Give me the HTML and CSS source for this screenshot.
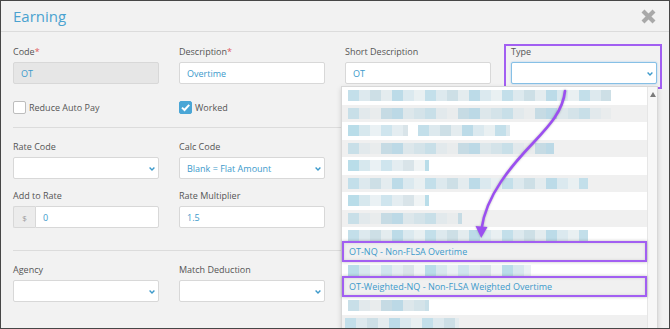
FILE: index.html
```html
<!DOCTYPE html>
<html lang="en">
<head>
    <meta charset="UTF-8">
    <title>Earning</title>
    <link rel="stylesheet" href="styles.css">
</head>
<body>
    <div class="modal">
        <div class="modal-header">
            <h2 class="modal-title">Earning</h2>
            <button class="close-btn" aria-label="Close">
                <svg width="17" height="17" viewBox="0 0 17 17">
                    <path d="M3 3 L14 14 M14 3 L3 14" stroke="#a9a9a9" stroke-width="4.2" fill="none"/>
                </svg>
            </button>
        </div>

        <div class="modal-body">
            <div class="form-row">
                <div class="field">
                    <label>Code<span class="req">*</span></label>
                    <div class="input disabled">OT</div>
                </div>
                <div class="field">
                    <label>Description<span class="req">*</span></label>
                    <div class="input">Overtime</div>
                </div>
                <div class="field">
                    <label>Short Description</label>
                    <div class="input">OT</div>
                </div>
                <div class="field marked-field">
                    <label>Type</label>
                    <div class="input select focused">
                        <svg class="chevron" width="6" height="4" viewBox="0 0 6 4"><path d="M0.6 0.6 L3 3 L5.4 0.6" stroke="#3d9acb" stroke-width="1.4" fill="none"/></svg>
                    </div>
                </div>
            </div>

            <div class="check-row">
                <label class="check"><span class="box"></span>Reduce Auto Pay</label>
                <label class="check"><span class="box checked">
                    <svg width="11" height="11" viewBox="0 0 11 11"><path d="M2 5.6 L4.5 8 L9.2 2.8" stroke="#fff" stroke-width="2" fill="none"/></svg>
                </span>Worked</label>
            </div>

            <hr class="divider">

            <div class="form-row">
                <div class="field">
                    <label>Rate Code</label>
                    <div class="input select">
                        <svg class="chevron" width="6" height="4" viewBox="0 0 6 4"><path d="M0.6 0.6 L3 3 L5.4 0.6" stroke="#3d9acb" stroke-width="1.4" fill="none"/></svg>
                    </div>
                </div>
                <div class="field">
                    <label>Calc Code</label>
                    <div class="input select">Blank = Flat Amount
                        <svg class="chevron" width="6" height="4" viewBox="0 0 6 4"><path d="M0.6 0.6 L3 3 L5.4 0.6" stroke="#3d9acb" stroke-width="1.4" fill="none"/></svg>
                    </div>
                </div>
            </div>

            <div class="form-row row-tight">
                <div class="field">
                    <label>Add to Rate</label>
                    <div class="input-group">
                        <span class="addon">$</span>
                        <div class="input">0</div>
                    </div>
                </div>
                <div class="field">
                    <label>Rate Multiplier</label>
                    <div class="input">1.5</div>
                </div>
            </div>

            <hr class="divider divider-low">

            <div class="form-row">
                <div class="field">
                    <label>Agency</label>
                    <div class="input select">
                        <svg class="chevron" width="6" height="4" viewBox="0 0 6 4"><path d="M0.6 0.6 L3 3 L5.4 0.6" stroke="#3d9acb" stroke-width="1.4" fill="none"/></svg>
                    </div>
                </div>
                <div class="field">
                    <label>Match Deduction</label>
                    <div class="input select">
                        <svg class="chevron" width="6" height="4" viewBox="0 0 6 4"><path d="M0.6 0.6 L3 3 L5.4 0.6" stroke="#3d9acb" stroke-width="1.4" fill="none"/></svg>
                    </div>
                </div>
            </div>
        </div>

        <!-- open Type dropdown, option names are blurred out -->
        <div class="type-dropdown">
            <ul class="opt-list">
                <li class="opt"><span class="blur p1 w263"></span></li>
                <li class="opt alt"><span class="blur p2 w263"></span></li>
                <li class="opt"><span class="blur p3 w60"></span><span class="blur p1 w92 gap"></span></li>
                <li class="opt alt"><span class="blur p2 w206"></span></li>
                <li class="opt"><span class="blur p3 w81"></span></li>
                <li class="opt alt"><span class="blur p1 w240"></span></li>
                <li class="opt"><span class="blur p3 w81"></span></li>
                <li class="opt alt"><span class="blur p2 w114"></span></li>
                <li class="opt"><span class="blur p1 w240"></span></li>
                <li class="opt alt marked"><span class="opt-text">OT-NQ - Non-FLSA Overtime</span></li>
                <li class="opt"><span class="blur p3 w183"></span></li>
                <li class="opt alt marked"><span class="opt-text">OT-Weighted-NQ - Non-FLSA Weighted Overtime</span></li>
                <li class="opt"><span class="blur p2 w81"></span></li>
                <li class="opt alt"><span class="blur p1 w114 shift"></span></li>
                <li class="opt"><span class="blur p3 w206"></span></li>
            </ul>
            <div class="scrollbar"><span class="scroll-up"></span></div>
        </div>

        <svg class="annotation" width="670" height="329" viewBox="0 0 670 329">
            <path d="M565 91 C563 111 549 126 534 142 C512 165 486 195 481.5 229" stroke="#9b4ff0" stroke-width="2.6" fill="none" stroke-linecap="round"/>
            <path d="M475.5 226 L487.5 227 L481.2 238 Z" fill="#9b4ff0"/>
        </svg>
    </div>
</body>
</html>
```

FILE: styles.css
```css
* {
    box-sizing: border-box;
    margin: 0;
    padding: 0;
}

body {
    font-family: "Open Sans", "DejaVu Sans", sans-serif;
    background: #f2f2f2;
    width: 670px;
    height: 329px;
    overflow: hidden;
}

.modal {
    position: relative;
    width: 670px;
    height: 329px;
    border: 1px solid #474747;
    background: #f2f2f2;
    overflow: hidden;
}

.modal-header {
    height: 31px;
    border-bottom: 1px solid #dcdcdc;
    display: flex;
    align-items: center;
    justify-content: space-between;
    padding: 0 12px;
}

.modal-title {
    font-weight: normal;
    font-size: 15px;
    color: #4aa2d0;
    margin-top: -1px;
}

.close-btn {
    border: none;
    background: none;
    width: 17px;
    height: 17px;
    display: flex;
}

.modal-body {
    padding: 12px 12px 0;
}

.form-row {
    display: grid;
    grid-template-columns: repeat(4, 146px);
    column-gap: 20px;
}

.field {
    position: relative;
}

.field label {
    display: block;
    font-size: 9px;
    line-height: 15px;
    color: #555;
    margin-bottom: 3px;
}

.req {
    color: #e05a5a;
}

.input {
    position: relative;
    height: 22px;
    background: #fff;
    border: 1px solid #d8d8d8;
    border-radius: 2px;
    font-size: 9px;
    color: #3d9acb;
    padding: 0 7px;
    display: flex;
    align-items: center;
}

.input.disabled {
    background: #e6e6e6;
}

.input.focused {
    border-color: #86c0e6;
    box-shadow: 0 0 2px rgba(102, 175, 233, 0.6);
}

.chevron {
    position: absolute;
    right: 3px;
    top: 9px;
}

/* purple annotation box round the Type field */
.marked-field::after {
    content: "";
    position: absolute;
    top: 0;
    left: -7px;
    right: -5px;
    bottom: -5px;
    border: 2px solid #a25ff2;
}

.input-group {
    display: flex;
}

.addon {
    width: 22px;
    height: 22px;
    background: #ececec;
    border: 1px solid #d8d8d8;
    border-right: none;
    border-radius: 2px 0 0 2px;
    font-size: 8px;
    color: #9a9a9a;
    display: flex;
    align-items: center;
    justify-content: center;
}

.input-group .input {
    flex: 1;
    border-radius: 0 2px 2px 0;
}

.check-row {
    display: grid;
    grid-template-columns: repeat(4, 146px);
    column-gap: 20px;
    margin-top: 17px;
    height: 13px;
}

.check {
    display: flex;
    align-items: center;
    gap: 3px;
    font-size: 9px;
    color: #555;
}

.box {
    width: 13px;
    height: 13px;
    background: #fff;
    border: 1px solid #bdbdbd;
    border-radius: 2px;
    display: flex;
    align-items: center;
    justify-content: center;
}

.box.checked {
    background: #4aa6d6;
    border-color: #4aa6d6;
}

.divider {
    border: none;
    border-top: 1px solid #dcdcdc;
    margin: 13px 0 11px;
}

.row-tight {
    margin-top: 9px;
}

.divider-low {
    margin-top: 22px;
}

.type-dropdown {
    position: absolute;
    left: 340px;
    top: 85px;
    width: 317px;
    height: 260px;
    background: #fff;
    border: 1px solid #d8d8d8;
    box-shadow: 0 2px 5px rgba(0, 0, 0, 0.15);
    display: flex;
}

.opt-list {
    flex: 1;
    list-style: none;
}

.opt {
    height: 17.5px;
    padding-left: 6px;
    display: flex;
    align-items: center;
    background: #fff;
}

.opt.alt {
    background: #f0f0f0;
}

.opt.marked {
    position: relative;
    height: 21px;
    margin-top: -3.5px;
    padding-left: 5px;
    border: 2px solid #a25ff2;
    box-shadow: 0 0 3px rgba(0, 0, 0, 0.25), inset 0 0 3px rgba(0, 0, 0, 0.12);
}

.opt-text {
    font-size: 9px;
    color: #3d9acb;
}

.blur {
    display: block;
    height: 11px;
}

.blur.gap {
    margin-left: 10px;
}

.blur.shift {
    margin-left: -3px;
}

.p1 {
    background: repeating-linear-gradient(90deg, #c3dfea 0 11px, #dde9ee 11px 22px, #cddfe6 22px 33px, #e4ecef 33px 44px, #bcdbe8 44px 55px, #dbe9ef 55px 66px, #e9f0f2 66px 77px);
}

.p2 {
    background: repeating-linear-gradient(90deg, #c8dfe8 0 11px, #e2e9ec 11px 22px, #e9eced 22px 33px, #c6dbe4 33px 44px, #bcd9e6 44px 55px, #dde7eb 55px 66px, #d4e3e9 66px 77px);
}

.p3 {
    background: repeating-linear-gradient(90deg, #b9dde9 0 11px, #d7e8ee 11px 22px, #eaf1f4 22px 33px, #cfe5ee 33px 44px, #e4edf1 44px 55px, #d9e4e9 55px 66px, #f0f4f5 66px 77px);
}

.w60 { width: 60px; }
.w81 { width: 81px; }
.w92 { width: 92px; }
.w114 { width: 114px; }
.w183 { width: 183px; }
.w206 { width: 206px; }
.w240 { width: 240px; }
.w263 { width: 263px; }

.scrollbar {
    width: 10px;
    background: #f7f7f7;
    border-left: 1px solid #e6e6e6;
    display: flex;
    justify-content: center;
    padding-top: 5px;
}

.scroll-up {
    width: 0;
    height: 0;
    border-left: 3px solid transparent;
    border-right: 3px solid transparent;
    border-bottom: 5px solid #7a7a7a;
}

.annotation {
    position: absolute;
    left: -1px;
    top: -1px;
    pointer-events: none;
    filter: drop-shadow(0 0 1px rgba(0, 0, 0, 0.25));
}
```
